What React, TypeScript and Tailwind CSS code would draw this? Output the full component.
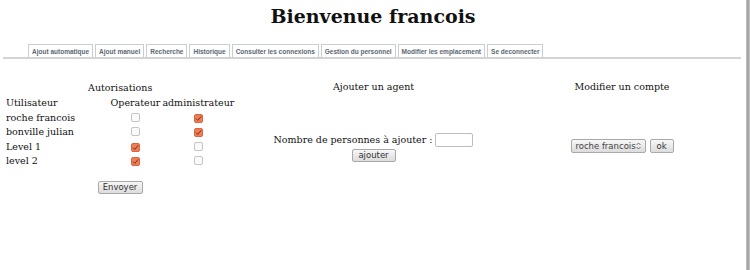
import React from "react";

const tabs = [
  "Ajout automatique",
  "Ajout manuel",
  "Recherche",
  "Historique",
  "Consulter les connexions",
  "Gestion du personnel",
  "Modifier les emplacement",
  "Se deconnecter",
];

function Box({ checked }: { checked: boolean }) {
  if (checked) {
    return (
      <span className="inline-flex h-[9px] w-[9px] items-center justify-center rounded-[2px] border border-[#d9663f] bg-[#ee7c55]">
        <svg width="7" height="7" viewBox="0 0 7 7">
          <path d="M1 3.6 L2.8 5.4 L6.2 1.4" stroke="#6b2a14" strokeWidth="0.9" fill="none" />
        </svg>
      </span>
    );
  }
  return <span className="inline-block h-[9px] w-[9px] rounded-[2px] border border-[#c4c4c4] bg-[#fafafa]" />;
}

const rows: [string, boolean, boolean][] = [
  ["roche francois", false, true],
  ["bonville julian", false, true],
  ["Level 1", true, false],
  ["level 2", true, false],
];

const btn =
  "inline-flex items-center justify-center h-[13px] rounded-[2px] border border-[#a9a9a9] bg-gradient-to-b from-[#f7f7f7] to-[#dcdcdc] text-[8.5px] leading-none text-[#333] font-['DejaVu_Sans',sans-serif]";

export default function App() {
  return (
    <div className="relative h-[270px] w-[750px] overflow-hidden bg-white font-['DejaVu_Serif',serif] text-[9.5px] leading-[14.5px] text-[#111]">
      <div className="absolute right-0 top-0 h-full w-[4px] bg-gradient-to-r from-[#c8c8c8] via-[#9a9a9a] to-[#d0d0d0]" />
      <h1 className="pt-[5px] text-center text-[19px] font-bold leading-[22px] w-[746px]">Bienvenue francois</h1>
      <div className="ml-[3px] mt-[17px] w-[738px] border-b-2 border-[#d3d3d3] pl-[25px] flex gap-[2px]">
        {tabs.map((t) => (
          <span
            key={t}
            className="h-[13px] border border-b-0 border-[#c9ced3] px-[3px] text-[6.5px] font-bold leading-[13px] text-[#5b6873] font-['Liberation_Sans',sans-serif]"
          >
            {t}
          </span>
        ))}
      </div>
      <div className="mt-[20px] flex w-[746px]">
        <div className="w-[249px] pl-[5px]">
          <table className="border-separate border-spacing-0">
            <caption className="text-center leading-[17px]">Autorisations</caption>
            <tbody>
              <tr className="h-[14.5px]">
                <td className="pl-[1px] pr-[52px]">Utilisateur</td>
                <td className="text-center px-[1px]">Operateur</td>
                <td className="text-center px-[1px]">administrateur</td>
              </tr>
              {rows.map(([n, a, b]) => (
                <tr key={n} className="h-[14.5px]">
                  <td className="pl-[1px]">{n}</td>
                  <td className="text-center">
                    <span className="inline-flex translate-y-[1px]"><Box checked={a} /></span>
                  </td>
                  <td className="text-center">
                    <span className="inline-flex translate-y-[1px]"><Box checked={b} /></span>
                  </td>
                </tr>
              ))}
            </tbody>
          </table>
          <div className="mt-[12px] flex w-[230px] justify-center">
            <span className={`${btn} w-[45px]`}>Envoyer</span>
          </div>
        </div>
        <div className="flex w-[249px] flex-col items-center">
          <div className="leading-[15px]">Ajouter un agent</div>
          <div className="mt-[39px] flex items-center">
            <span>Nombre de personnes à ajouter :</span>
            <span className="ml-[3px] inline-block h-[14px] w-[38px] rounded-[2px] border border-[#bdbdbd] bg-white" />
          </div>
          <span className={`${btn} mt-[1px] w-[44px]`}>ajouter</span>
        </div>
        <div className="flex w-[248px] flex-col items-center">
          <div className="leading-[15px]">Modifier un compte</div>
          <div className="mt-[45px] flex items-center gap-[4px]">
            <span className={`${btn} h-[14px] w-[75px] justify-between px-[3px] text-[#444]`}>
              <span>roche francois</span>
              <svg width="5" height="8" viewBox="0 0 5 8">
                <path d="M0.5 3 L2.5 1 L4.5 3 M0.5 5 L2.5 7 L4.5 5" stroke="#555" strokeWidth="0.8" fill="none" />
              </svg>
            </span>
            <span className={`${btn} h-[14px] w-[24px]`}>ok</span>
          </div>
        </div>
      </div>
    </div>
  );
}
